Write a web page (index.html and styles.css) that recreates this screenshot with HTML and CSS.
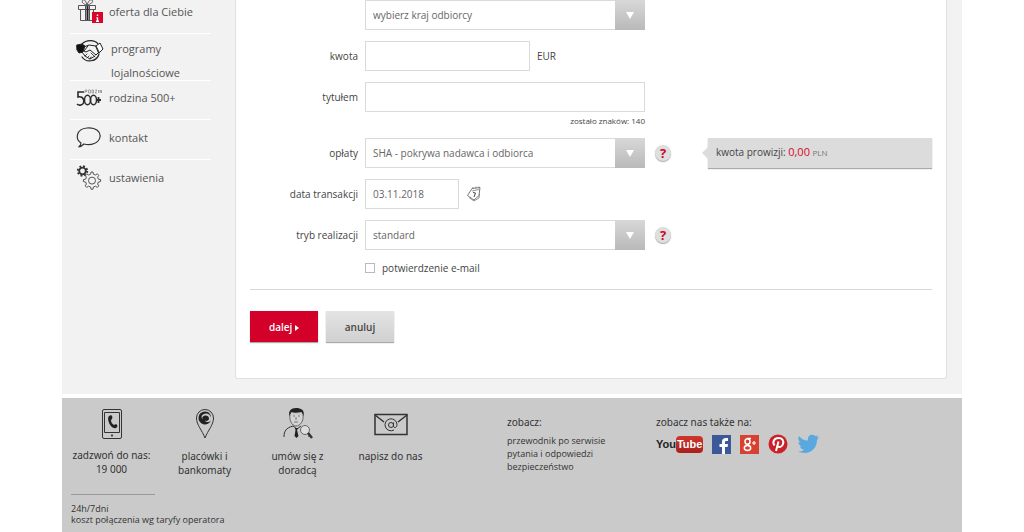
FILE: index.html
```html
<!DOCTYPE html>
<html lang="pl">
<head>
<meta charset="utf-8">
<meta name="viewport" content="width=device-width, initial-scale=1">
<title>Przelew</title>
<link rel="stylesheet" href="styles.css">
</head>
<body>
<div class="page">
  <div class="main">
    <nav class="sidebar">
      <a class="nav-item nav-offer" href="#">
        <svg class="nav-icon" width="28" height="28" viewBox="0 0 28 28" fill="none" stroke="#555">
          <path d="M2.500 7.500h17v4h-17zM4.500 11.500v11h13v-11" fill="#f2f2f2"/>
          <path d="M9.500 8v14M13.500 8v14"/>
          <path d="M11.500 8v14" stroke="#222" stroke-width="2"/>
          <path d="M11 7C7 6 5 4 7 2c2-1 3 2 4 5 1-3 3-6 5-5 2 2-1 4-5 5z"/>
          <path d="M16 14h11v11H16z" fill="#d9062b" stroke="none"/>
          <path d="M21.500 16.500v1.500M21.500 19.500v4M20.500 19.800h1M20 23.200h3" stroke="#fff" stroke-width="1.400"/>
        </svg>
        <span>oferta dla Ciebie</span>
      </a>
      <a class="nav-item nav-loyalty" href="#">
        <svg class="nav-icon" width="28" height="24" viewBox="0 0 28 24" fill="none" stroke="#222" stroke-linejoin="round" stroke-linecap="round">
          <path d="M6 4C10-.5 19-.5 22 4M23 14c-2 8-13 9-17 3" stroke-width="1.200"/>
          <path d="M1 5l5-1 3 2-2 6-4 1-2-3z" fill="#111"/>
          <path d="M20 6l4-3 3 6-4 4z" fill="#fff"/>
          <path d="M8 7l5-2 7 1 3 6-3 3-6-5-4 2-2-1 4-5M6 12l3 4 5 3 5-3"/>
          <path d="M9 16l2-2M11 18l2-2M14 19l1-2M15 13l4 4" stroke-width=".8"/>
        </svg>
        <span>programy<br>lojalnościowe</span>
      </a>
      <a class="nav-item nav-family" href="#">
        <svg class="nav-icon" width="28" height="20" viewBox="0 0 28 20" fill="none" stroke="#2b2b2b">
          <path d="M8 4H2v5c6-2 8 7 3 8-2 .5-3 0-4-1" stroke-width="1.600"/>
          <ellipse cx="11.500" cy="12" rx="3" ry="4.700" stroke-width="1.500"/>
          <ellipse cx="17.500" cy="12" rx="3" ry="4.700" stroke-width="1.500"/>
          <path d="M20 12h5M22.500 9v6" stroke-width="1.800"/>
          <path d="M9 5V2h2v1.500H9M12.500 2h2v3h-2zM16 2v3h1.500V2zM19 2h2l-2 3h2M22.500 2v3M24 5V2l1.500 3V2" stroke="#777" stroke-width=".6"/>
        </svg>
        <span>rodzina 500+</span>
      </a>
      <a class="nav-item nav-contact" href="#">
        <svg class="nav-icon" width="28" height="24" viewBox="0 0 28 24" fill="none" stroke="#333" stroke-width="1.200">
          <path d="M5 17C-1 13 0 3 11 2c9-1 14 4 13 9-1 6-9 9-16 7-1 1-3 2.500-5.500 3C4 20 5 18.500 5 17z"/>
        </svg>
        <span>kontakt</span>
      </a>
      <a class="nav-item nav-settings" href="#">
        <svg class="nav-icon" width="28" height="28" viewBox="0 0 28 28" fill="none" stroke="#333">
          <circle cx="6.500" cy="7" r="3.300" stroke-width="1.800"/>
          <circle cx="6.500" cy="7" r="4.700" stroke-width="2" stroke-dasharray="1.800 1.900"/>
          <path d="M14.600 10.200l.4-2.200h2l.4 2.200 2 .8 1.900-1.200 1.500 1.500-1.200 1.900.8 2 2.200.4v2l-2.200.4-.8 2 1.200 1.900-1.500 1.500-1.900-1.200-2 .8-.4 2.200h-2l-.4-2.200-2-.8-1.900 1.200-1.500-1.500 1.200-1.900-.8-2-2.200-.4v-2l2.200-.4.8-2-1.200-1.900 1.500-1.500 1.900 1.200z" stroke="#555"/>
          <circle cx="16" cy="16.600" r="3.500" stroke="#555"/>
        </svg>
        <span>ustawienia</span>
      </a>
    </nav>

    <form class="card">
      <div class="row">
        <span class="row-label"></span>
        <span class="select"><select aria-label="kraj odbiorcy"><option>wybierz kraj odbiorcy</option></select></span>
      </div>
      <div class="row">
        <label class="row-label" for="amount">kwota</label>
        <input class="field field-amount" id="amount" type="text">
        <span>EUR</span>
      </div>
      <div class="row">
        <label class="row-label" for="title">tytułem</label>
        <input class="field field-title" id="title" type="text">
      </div>
      <p class="counter">zostało znaków: 140</p>
      <div class="row">
        <label class="row-label" for="fees">opłaty</label>
        <span class="select"><select id="fees"><option>SHA - pokrywa nadawca i odbiorca</option></select></span>
        <button class="help" type="button">?</button>
        <p class="commission">kwota prowizji: <strong>0,00</strong> <small>PLN</small></p>
      </div>
      <div class="row">
        <label class="row-label" for="date">data transakcji</label>
        <input class="field field-date" id="date" type="text" value="03.11.2018">
        <button class="calendar" type="button" aria-label="kalendarz">
          <svg width="16" height="16" viewBox="0 0 16 16" fill="none" stroke="#777">
            <path d="M6 2.500l8-1-1 8L8 14 1.500 9.500z" fill="#fff"/>
            <path d="M3 11.500l5 3.500 5-3 .5-4M6 5l7-1.500M7 3V1M10 2.500V.5M13 2V.5" stroke-width=".8"/>
            <path d="M7 6.500l2.500.5-1.500 4" stroke="#444"/>
          </svg>
        </button>
      </div>
      <div class="row">
        <label class="row-label" for="mode">tryb realizacji</label>
        <span class="select"><select id="mode"><option>standard</option></select></span>
        <button class="help" type="button">?</button>
      </div>
      <div class="confirm">
        <input class="checkbox" id="confirm" type="checkbox">
        <label for="confirm">potwierdzenie e-mail</label>
      </div>
      <div class="actions">
        <button class="btn btn-primary" type="submit">dalej <svg width="4" height="6" viewBox="0 0 4 6"><path d="M0 0l4 3-4 3z" fill="#fff"/></svg></button>
        <button class="btn" type="button">anuluj</button>
      </div>
    </form>
  </div>

  <footer class="footer">
    <div class="footer-top">
      <a class="contact" href="#">
        <svg width="34" height="34" viewBox="0 0 34 34" fill="none" stroke="#333">
          <rect x="7.500" y="2.500" width="19" height="29" rx="1.500"/>
          <path d="M9.500 5.500h15v20h-15z"/>
          <path d="M14 9c3-2 4 1 3 3l-1 1c0 2 1 4 3 5l2-1c2 1 2 3 0 4-5 2-10-9-7-12z" fill="#222" stroke="none"/>
          <circle cx="17" cy="28.500" r="1" fill="#222" stroke="none"/>
        </svg>
        <span>zadzwoń do nas:<br>19 000</span>
      </a>
      <a class="contact" href="#">
        <svg width="34" height="34" viewBox="0 0 34 34" fill="none" stroke="#333">
          <path d="M17 31C14 23 8.500 18 8.500 11a8.500 8.500 0 0 1 17 0C25.500 18 20 23 17 31z"/>
          <path d="M17 4.500a6.500 6.500 0 1 0 6 9c-2 2-5 2-6 0 2 1 4 0 4-2 0-3-4-4-6-2-1 1-1 2 0 3-2-1-2-4 0-5 3-2 7-1 8 3 0-3-2-6-6-6z" fill="#222" stroke="none"/>
        </svg>
        <span>placówki i<br>bankomaty</span>
      </a>
      <a class="contact" href="#">
        <svg width="34" height="34" viewBox="0 0 34 34" fill="none" stroke="#333">
          <path d="M9 8c-1 5 2 11 6 11s8-5 7-11" fill="#d5d5d5" stroke="#666"/>
          <path d="M8.500 9C7 4 10 1 15 1s9 2 7.500 8l-2-4c-4 1-8 1-10 0z" fill="#222" stroke="none"/>
          <path d="M12 9h2M17 9h2M15 10v3M13 15h4" stroke="#777"/>
          <path d="M3 30c0-6 2-9 9-11l4 3 4-3M28 26v4"/>
          <path d="M14 21h3l-1 2 1.500 6-2 2-2-2 1-6z" fill="#222" stroke="none"/>
          <circle cx="24" cy="23" r="4.500" fill="#ddd" stroke="#666"/>
          <path d="M27 26l4 5" stroke-width="2.500"/>
        </svg>
        <span>umów się z<br>doradcą</span>
      </a>
      <a class="contact" href="#">
        <svg width="34" height="34" viewBox="0 0 34 34" fill="none" stroke="#333">
          <path d="M1 7.500h32v20H1z" stroke-width="1.500"/>
          <path d="M1 8l9 7M33 8l-9 7" stroke-width="1.500"/>
          <circle cx="17" cy="18" r="2.500"/>
          <path d="M19.500 15.500v4c1 2 3.500 1 3.500-2a6 6 0 1 0-3 5.500"/>
        </svg>
        <span>napisz do nas</span>
      </a>
      <div class="links">
        <h2>zobacz:</h2>
        <a href="#">przewodnik po serwisie</a>
        <a href="#">pytania i odpowiedzi</a>
        <a href="#">bezpieczeństwo</a>
      </div>
      <div class="social">
        <h2>zobacz nas także na:</h2>
        <div class="social-icons">
          <a class="youtube" href="#"><span>You</span><b>Tube</b></a>
          <a href="#" aria-label="Facebook"><svg width="19" height="19" viewBox="0 0 19 19"><path d="M0 0h19v19H0z" fill="#3b5998"/><path d="M10 19v-7H7.500V9H10V7c0-3 1.500-4 4-4h2v3h-1.500C13 6 13 6.500 13 7.500V9h3l-.4 3H13v7z" fill="#fff"/></svg></a>
          <a href="#" aria-label="Google+"><svg width="19" height="19" viewBox="0 0 19 19"><path d="M0 0h19v19H0z" fill="#d8412f"/><g fill="none" stroke="#fff" stroke-width="1.500"><ellipse cx="7.500" cy="6.500" rx="2.500" ry="2.800"/><path d="M7 3.500h4M8.500 9c-1 1 0 1 1 2"/><ellipse cx="7.500" cy="13" rx="3.200" ry="2.400"/><path d="M12 8h4M14 6v4" stroke-width="1.200"/></g></svg></a>
          <a href="#" aria-label="Pinterest"><svg width="20" height="20" viewBox="0 0 20 20"><circle cx="10" cy="10" r="9.500" fill="#cb2027"/><path d="M6.500 11.500C4 8 6 4 10.500 4c4 0 5.500 3 4.500 6-1 3-4 4-5.500 2M10.500 7.500L8 17" fill="none" stroke="#fff" stroke-width="2"/></svg></a>
          <a href="#" aria-label="Twitter"><svg width="22" height="20" viewBox="0 0 22 20"><path d="M22 3.500l-2 2.500C20 15 12 22 1 17.500c3 0 5-.5 6-2-2 0-3.500-1-4-3h2C2.500 11.500 1.500 10 1.500 8l2 .5C1 6.500 1 4 2 2c2.500 3 5 4.500 9 4.500C10 3 13 0 16 1c1 0 2 .7 2.500 1.300L21 1.500 20 3.700z" fill="#59a9e0"/></svg></a>
        </div>
      </div>
    </div>
    <p class="note">24h/7dni<br>koszt połączenia wg taryfy operatora</p>
  </footer>
</div>
</body>
</html>
```
FILE: styles.css
```css
* {
  box-sizing: border-box;
}

body {
  margin: 0;
  background: #fff;
  color: #444;
  font: 10px/14px "Open Sans", "Noto Sans", sans-serif;
}

a {
  color: inherit;
  text-decoration: none;
}

p,
h2 {
  margin: 0;
}

svg {
  flex: none;
}

input,
select,
button {
  font: inherit;
  color: inherit;
  border-radius: 0;
}

.page {
  display: flex;
  flex-direction: column;
  max-width: 900px;
  min-height: 100vh;
  margin: 0 auto;
}

.main {
  display: flex;
  padding-right: 15px;
  padding-bottom: 15px;
  background: #f2f2f2;
}

/* Side navigation */

.sidebar {
  width: 173px;
  flex: none;
  padding: 0 24px 0 8px;
}

.nav-item {
  display: flex;
  align-items: center;
  gap: 5px;
  height: 40px;
  padding-left: 6px;
  border-bottom: 1px solid #fff;
  font-size: 11px;
  line-height: 24px;
  color: #555;
}

.nav-offer {
  height: 34px;
  padding-bottom: 9px;
}

.nav-loyalty {
  gap: 7px;
  align-items: flex-start;
  height: 47px;
  padding-top: 3px;
}

.nav-loyalty .nav-icon {
  margin-top: 3px;
}

.nav-family {
  height: 39px;
  padding-bottom: 5px;
}

.nav-contact {
  padding-bottom: 4px;
}

.nav-settings {
  padding-bottom: 5px;
  border-bottom: 0;
}

/* Transfer form */

.card {
  flex: 1;
  min-width: 0;
  padding: 0 14px 36px;
  border: 1px solid #e0e0e0;
  border-top: 0;
  border-radius: 0 0 3px 3px;
  background: #fff;
}

.row {
  display: flex;
  align-items: center;
  gap: 7px;
  margin-bottom: 11px;
}

.row-label {
  width: 108px;
  flex: none;
  text-align: right;
}

.field,
.select select {
  height: 30px;
  padding: 0 7px;
  border: 1px solid #dadada;
  background: #fff;
  color: #666;
}

.field-amount {
  width: 165px;
}

.field-title {
  width: 280px;
}

.field-date {
  width: 94px;
}

.select {
  position: relative;
  width: 280px;
  flex: none;
}

.select select {
  display: block;
  width: 100%;
  appearance: none;
}

.select::before {
  content: "";
  position: absolute;
  inset: 0 0 0 auto;
  width: 30px;
  background: linear-gradient(#d8d8d8, #b9b9b9);
  pointer-events: none;
}

.select::after {
  content: "";
  position: absolute;
  top: 12px;
  right: 11px;
  border: 4px solid transparent;
  border-top: 7px solid #fff;
  border-bottom: 0;
  pointer-events: none;
}

.counter {
  width: 395px;
  height: 15px;
  margin-top: -11px;
  margin-bottom: 11px;
  padding-top: 2px;
  font-size: 8px;
  text-align: right;
}

.help {
  width: 16px;
  height: 16px;
  margin-left: 3px;
  padding: 0;
  border: 0;
  border-radius: 50%;
  background: #dedede;
  box-shadow: 0 1px 1px #aaa;
  color: #d0042c;
  font: bold 13px/16px "Open Sans", sans-serif;
}

.commission {
  position: relative;
  flex: 1;
  height: 30px;
  margin-left: 30px;
  padding: 7px 8px;
  background: #dcdcdc;
  box-shadow: 0 1px 1px #aaa;
}

.commission::before {
  content: "";
  position: absolute;
  top: 9px;
  left: -6px;
  border: 6px solid transparent;
  border-right-color: #dcdcdc;
  border-left: 0;
}

.commission strong {
  color: #d9062b;
  font-size: 11px;
  font-weight: 500;
}

.commission small {
  color: #777;
  font-size: 8px;
}

.calendar {
  display: flex;
  padding: 0;
  border: 0;
  background: none;
}

.confirm {
  display: flex;
  align-items: center;
  gap: 7px;
  padding: 0 0 14px 115px;
  border-bottom: 1px solid #d8d8d8;
}

.checkbox {
  width: 10px;
  height: 10px;
  margin: 0;
  border: 1px solid #bbb;
  background: #fff;
  appearance: none;
}

.checkbox:checked {
  background: #d0042c;
}

.actions {
  display: flex;
  gap: 8px;
  padding-top: 21px;
}

.btn {
  width: 68px;
  height: 31px;
  padding: 0;
  border: 0;
  background: linear-gradient(#e4e4e4, #d0d0d0);
  box-shadow: 0 1px 1px #aaa;
  font-weight: 600;
}

.btn-primary {
  background: #d3002a;
  color: #fff;
}

/* Footer */

.footer {
  flex: 1;
  margin-top: 4px;
  padding: 9px 8px 6px;
  background: #cacaca;
  color: #333;
}

.footer-top {
  display: flex;
  margin-left: -5px;
}

.contact {
  display: flex;
  flex-direction: column;
  align-items: center;
  gap: 8px;
  width: 93px;
  flex: none;
  font-family: "Noto Sans", sans-serif;
  text-align: center;
}

.contact:first-child {
  gap: 7px;
}

.links {
  display: flex;
  flex-direction: column;
  width: 149px;
  margin-left: 70px;
  padding-top: 8px;
  font-size: 9px;
  line-height: 13px;
}

.links h2,
.social h2 {
  margin-bottom: 5px;
  font: 10px/14px "Noto Sans", sans-serif;
}

.social {
  padding-top: 8px;
}

.social-icons {
  display: flex;
  align-items: center;
  gap: 9px;
}

.social-icons a {
  display: flex;
}

.social-icons .youtube {
  align-items: center;
  color: #222;
  font: bold 11px/17px "Liberation Sans", sans-serif;
}

.youtube b {
  padding: 0 1px;
  border-radius: 4px;
  background: linear-gradient(#d0352f, #a9201c);
  color: #fff;
}

.note {
  margin-top: 17px;
  padding-left: 1px;
  font-size: 9px;
  line-height: 11px;
}

.note::before {
  content: "";
  display: block;
  width: 84px;
  margin-bottom: 8px;
  border-top: 1px solid #999;
}
```
